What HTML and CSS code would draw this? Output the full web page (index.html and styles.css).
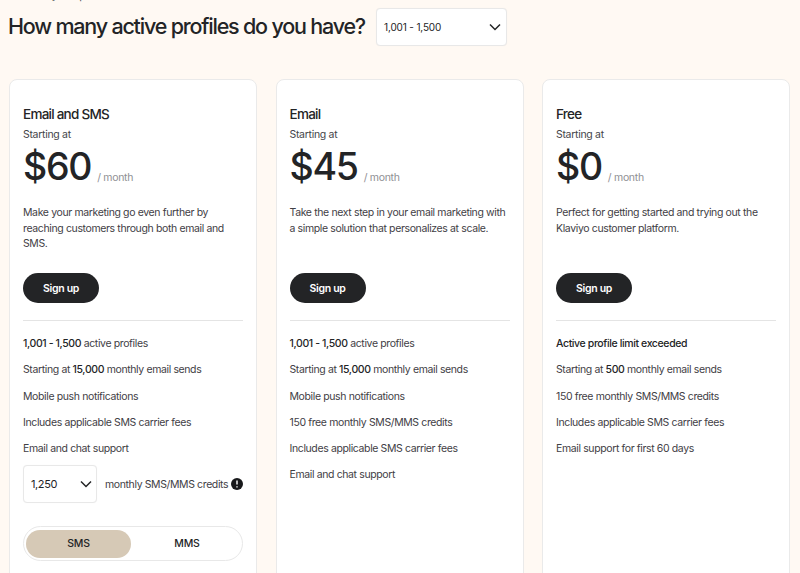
FILE: index.html
```html
<!DOCTYPE html>
<html lang="en">
<head>
<meta charset="utf-8">
<title>Pricing</title>
<link rel="stylesheet" href="styles.css">
</head>
<body>
<main class="page">
  <p class="crumb">Monthly plans</p>
  <header class="head">
    <h1>How many active profiles do you have?</h1>
    <div class="select select-wide"><span>1,001 - 1,500</span>
      <svg class="chev" viewBox="0 0 12 8"><path d="M1 1.5l5 5 5-5"/></svg></div>
  </header>
  <section class="cards">
    <article class="card">
      <h2>Email and SMS</h2>
      <p class="start">Starting at</p>
      <div class="price"><strong>$60</strong><span>/ month</span></div>
      <p class="desc">Make your marketing go even further by reaching customers through both email and SMS.</p>
      <a class="btn">Sign up</a>
      <hr>
      <ul>
        <li><b>1,001 - 1,500</b> active profiles</li>
        <li>Starting at <b>15,000</b> monthly email sends</li>
        <li>Mobile push notifications</li>
        <li>Includes applicable SMS carrier fees</li>
        <li>Email and chat support</li>
      </ul>
      <div class="credits">
        <div class="select select-small"><span>1,250</span>
          <svg class="chev" viewBox="0 0 12 8"><path d="M1 1.5l5 5 5-5"/></svg></div>
        <span class="credit-label">monthly SMS/MMS credits</span>
        <svg class="info" viewBox="0 0 12 12"><circle cx="6" cy="6" r="6"/><path d="M6 2.6v4M6 8.2v1.2"/></svg>
      </div>
      <div class="toggle"><span class="on">SMS</span><span class="off">MMS</span></div>
    </article>
    <article class="card">
      <h2>Email</h2>
      <p class="start">Starting at</p>
      <div class="price"><strong>$45</strong><span>/ month</span></div>
      <p class="desc">Take the next step in your email marketing with a simple solution that personalizes at scale.</p>
      <a class="btn">Sign up</a>
      <hr>
      <ul>
        <li><b>1,001 - 1,500</b> active profiles</li>
        <li>Starting at <b>15,000</b> monthly email sends</li>
        <li>Mobile push notifications</li>
        <li>150 free monthly SMS/MMS credits</li>
        <li>Includes applicable SMS carrier fees</li>
        <li>Email and chat support</li>
      </ul>
    </article>
    <article class="card">
      <h2>Free</h2>
      <p class="start">Starting at</p>
      <div class="price"><strong>$0</strong><span>/ month</span></div>
      <p class="desc">Perfect for getting started and trying out the Klaviyo customer platform.</p>
      <a class="btn">Sign up</a>
      <hr>
      <ul>
        <li><b>Active profile limit exceeded</b></li>
        <li>Starting at <b>500</b> monthly email sends</li>
        <li>150 free monthly SMS/MMS credits</li>
        <li>Includes applicable SMS carrier fees</li>
        <li>Email support for first 60 days</li>
      </ul>
    </article>
  </section>
</main>
</body>
</html>
```

FILE: styles.css
```css
* { box-sizing: border-box; }
html, body { margin: 0; height: 573px; overflow: hidden; }
body { background: #fff9f3; color: #232426; font-family: Inter, "Liberation Sans", sans-serif; }
.page { padding: 0 10px 0 8px; }
.crumb { margin: -12px 0 0; height: 20px; font-size: 11px; line-height: 14px; color: #55565a; padding-left: 8px; word-spacing: 18px; }
.head { display: flex; align-items: center; gap: 11px; height: 37px; }
h1 { margin: 0; font-size: 21.5px; font-weight: 500; letter-spacing: -1.2px; line-height: 37px; white-space: nowrap; }
.select { display: flex; align-items: center; justify-content: space-between; background: #fff; border: 1px solid #e8e8e8; border-radius: 4px; box-shadow: 0 0 1px rgba(0,0,0,.06); }
.select-wide { width: 131px; height: 38px; padding: 0 5px 0 7px; font-size: 10px; letter-spacing: -0.15px; }
.chev { width: 12px; height: 8px; fill: none; stroke: #232426; stroke-width: 1.5; }
.cards { display: grid; grid-template-columns: repeat(3, 248px); gap: 18.5px; margin: 34px 0 0 1px; }
.card { background: #fff; border: 1px solid #eaeaea; border-radius: 8px; height: 560px; padding: 25px 13px 0; }
h2 { margin: 0; font-size: 13.5px; font-weight: 500; letter-spacing: -0.75px; line-height: 18px; }
.start { margin: 5px 0 0; font-size: 10.5px; line-height: 14px; color: #44454a; letter-spacing: -0.3px; }
.price { display: flex; align-items: baseline; gap: 6px; margin-top: 3px; height: 48px; }
.price strong { font-size: 37.5px; font-weight: 500; letter-spacing: -1.3px; line-height: 44px; }
.price span { position: relative; top: 1px; font-size: 10.5px; color: #8f9094; letter-spacing: -0.3px; }
.desc { margin: 12px 0 0; height: 68px; font-size: 10.5px; line-height: 15.7px; color: #3f4045; letter-spacing: -0.37px; }
.btn { display: flex; align-items: center; justify-content: center; width: 76px; height: 30px; background: #232426; color: #fff; border-radius: 15px; font-size: 10.5px; font-weight: 600; letter-spacing: -0.3px; }
hr { margin: 17px 0 0; border: 0; border-top: 1px solid #e4e4e4; }
ul { list-style: none; margin: 15px 0 0; padding: 0; }
li { height: 26.25px; font-size: 10.5px; line-height: 16px; color: #3f4045; letter-spacing: -0.38px; }
li b { font-weight: 500; color: #232426; }
.credits { display: flex; align-items: center; margin-top: -2px; }
.select-small { flex: none; width: 74px; height: 38px; padding: 0 4px 0 7px; font-size: 11px; letter-spacing: -0.4px; margin-right: 8px; }
.credit-label { font-size: 10.5px; color: #3f4045; letter-spacing: -0.38px; white-space: nowrap; }
.info { flex: none; width: 12px; height: 12px; margin-left: 3px; fill: #18191b; }
.info path { stroke: #fff; stroke-width: 1.4; fill: none; }
.toggle { display: grid; grid-template-columns: 105px 1fr; align-items: center; width: 220px; height: 35px; margin-top: 23px; padding: 2px; border: 1px solid #e8e8e8; border-radius: 18px; font-size: 10.5px; font-weight: 500; text-align: center; letter-spacing: -0.2px; }
.toggle span { line-height: 28px; }
.toggle .off { padding-left: 3px; }
.toggle .on { background: #d6c9b6; border-radius: 14px; }
```
